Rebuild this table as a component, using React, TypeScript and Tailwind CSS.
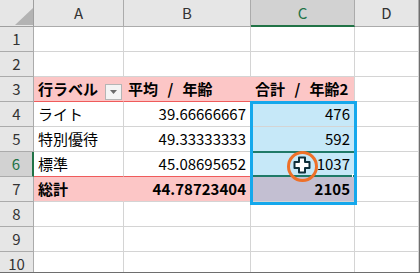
import React from "react";

const font = { fontFamily: '"Noto Sans CJK JP", "Noto Sans", sans-serif' };

type Cell = {
  text?: string;
  bold?: boolean;
  align?: "left" | "right";
  bg?: string;
  filter?: boolean;
  redBottom?: boolean;
  active?: boolean;
};

const cols = ["A", "B", "C", "D"];

// pivot table contents, keyed by row number
const rows: Record<number, Cell[]> = {
  3: [
    { text: "行ラベル", bold: true, bg: "bg-[#fcc6c6]", filter: true, redBottom: true },
    { text: "平均 / 年齢", bold: true, bg: "bg-[#fcc6c6]", redBottom: true },
    { text: "合計 / 年齢2", bold: true, bg: "bg-[#fcc6c6]" },
    {},
  ],
  4: [{ text: "ライト" }, { text: "39.66666667", align: "right" }, { text: "476", align: "right", bg: "bg-[#c6e8f8]" }, {}],
  5: [{ text: "特別優待" }, { text: "49.33333333", align: "right" }, { text: "592", align: "right", bg: "bg-[#c6e8f8]" }, {}],
  6: [
    { text: "標準", redBottom: true },
    { text: "45.08695652", align: "right", redBottom: true },
    { text: "1037", align: "right", bg: "bg-[#c6e8f8]", active: true },
    {},
  ],
  7: [
    { text: "総計", bold: true, bg: "bg-[#fcc6c6]" },
    { text: "44.78723404", bold: true, align: "right", bg: "bg-[#fcc6c6]" },
    { text: "2105", bold: true, align: "right", bg: "bg-[#c3bfd2]" },
    {},
  ],
};

function FilterButton() {
  return (
    <span className="absolute right-[1px] top-[7px] w-[17px] h-[16px] border border-[#b5b5b5] bg-[#f4f4f4] flex items-center justify-center">
      <svg width="7" height="4" viewBox="0 0 7 4">
        <path d="M0 0h7L3.5 4z" fill="#6b6b6b" />
      </svg>
    </span>
  );
}

function FatCross() {
  return (
    <svg width="18" height="18" viewBox="0 0 18 18" className="absolute left-[293px] top-[156px]">
      <path
        d="M6 1.5h6v4.5h4.5v6H12v4.5H6V12H1.5V6H6z"
        fill="#ffffff"
        stroke="#0f2f3a"
        strokeWidth="2"
        strokeLinejoin="round"
      />
    </svg>
  );
}

export default function App() {
  const rowNums = Array.from({ length: 10 }, (_, i) => i + 1);

  return (
    <div className="relative w-[420px] h-[273px] overflow-hidden bg-white text-[15px] text-black border-r border-b border-[#6e6e6e] [word-spacing:6px]" style={font}>
      <div className="grid grid-cols-[34px_90px_127px_104px_1fr] grid-rows-[27px_repeat(10,25px)]">
        {/* corner */}
        <div className="relative bg-[#e6e6e6] border-r border-b border-[#9f9f9f]">
          <svg width="18" height="17" viewBox="0 0 18 17" className="absolute left-[15px] top-[8px]">
            <path d="M18 0v17H0z" fill="#b3b3b3" />
          </svg>
        </div>
        {cols.map(c => (
          <div
            key={c}
            className={
              c === "C"
                ? "bg-[#d2d2d2] border-r border-[#ababab] border-b-2 border-b-[#217346] text-[#217346] flex items-center justify-center pt-[2px]"
                : "bg-[#e6e6e6] border-r border-b border-[#ababab] text-[#333] flex items-center justify-center"
            }
          >
            {c}
          </div>
        ))}

        {rowNums.map(r => (
          <React.Fragment key={r}>
            <div
              className={
                r === 6
                  ? "bg-[#d2d2d2] border-b border-[#ababab] border-r-2 border-r-[#217346] text-[#217346] flex items-center justify-center"
                  : "bg-[#e6e6e6] border-r border-b border-[#ababab] text-[#333] flex items-center justify-center"
              }
            >
              {r}
            </div>
            {cols.map((c, ci) => {
              const cell = rows[r]?.[ci] ?? {};
              const bottom = cell.active
                ? "border-b-[#1f7a68]"
                : cell.redBottom
                  ? "border-b-[#ef5b5b]"
                  : "border-b-[#d4d4d4]";
              const rightBorder = cell.bg && ci < 2 ? "border-r-transparent" : "border-r-[#d4d4d4]";
              return (
                <div
                  key={c}
                  className={`relative flex items-center px-[4px] border-r border-b whitespace-nowrap ${bottom} ${rightBorder} ${cell.bg ?? "bg-white"} ${
                    cell.align === "right" ? "justify-end" : "justify-start"
                  } ${cell.bold ? "font-bold" : ""} ${
                    cell.active ? "shadow-[inset_0_1px_0_#1f7a68,0_-1px_0_#1f7a68,inset_0_-1px_0_#1f7a68]" : ""
                  }`}
                >
                  {cell.text}
                  {cell.filter && <FilterButton />}
                  {cell.active && (
                    <span className="absolute right-[-3px] bottom-[-3px] w-[5px] h-[5px] bg-[#1f7a68] border border-white" />
                  )}
                </div>
              );
            })}
          </React.Fragment>
        ))}
      </div>

      {/* selection outline */}
      <div className="absolute left-[250px] top-[101px] w-[107px] h-[104px] border-[3px] border-[#15a8ec]" />

      <FatCross />
      <div className="absolute left-[287px] top-[151px] w-[31px] h-[31px] rounded-full border-[3px] border-[#ee7028]" />
    </div>
  );
}
